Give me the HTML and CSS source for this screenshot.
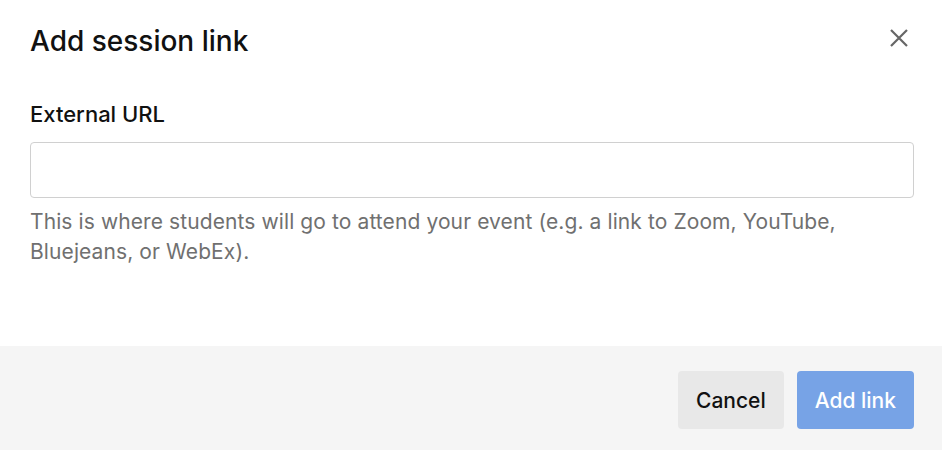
FILE: index.html
```html
<!DOCTYPE html>
<html lang="en">

<head>
    <meta charset="UTF-8">
    <meta name="viewport" content="width=device-width, initial-scale=1.0">
    <title>Add session link</title>
    <link rel="stylesheet" href="styles.css">
</head>
<body>
    <div class="modal">
        <div class="modal-body">
            <div class="modal-header">
                <h1>Add session link</h1>
                <button class="close" aria-label="Close">
                    <svg width="18" height="18" viewBox="0 0 18 18">
                        <path d="M1 1L17 17M17 1L1 17" stroke="#666" stroke-width="2.2" fill="none"/>
                    </svg>
                </button>
            </div>
            <form id="linkForm">
                <label for="url">External URL</label>
                <input type="text" id="url" name="url">
                <p class="help">This is where students will go to attend your event (e.g. a link to Zoom, YouTube, Bluejeans, or WebEx).</p>
            </form>
        </div>
        <div class="modal-footer">
            <button class="btn btn-cancel">Cancel</button>
            <button class="btn btn-primary" disabled>Add link</button>
        </div>
    </div>
</body>

</html>
```

FILE: styles.css
```css
body {
    font-family: Inter, "Noto Sans", sans-serif;
    background-color: #fff;
    margin: 0;
    padding: 0;
}

.modal {
    display: flex;
    flex-direction: column;
    height: 100vh;
}

.modal-body {
    flex: 1;
    padding: 23px 28px 0 30px;
}

.modal-header {
    display: flex;
    justify-content: space-between;
    align-items: flex-start;
}

h1 {
    margin: 0;
    font-size: 28px;
    line-height: 36px;
    font-weight: 500;
    color: #111;
}

.close {
    background: none;
    border: none;
    padding: 0;
    margin: 6px 6px 0 0;
    width: 18px;
    height: 18px;
    cursor: pointer;
}

.close svg {
    display: block;
}

#linkForm {
    display: flex;
    flex-direction: column;
    margin-top: 41px;
}

label {
    font-size: 22px;
    line-height: 28px;
    font-weight: 500;
    color: #111;
}

input {
    margin-top: 14px;
    height: 56px;
    box-sizing: border-box;
    border: 1px solid #d0d0d0;
    border-radius: 4px;
    padding: 0 14px;
    font-family: inherit;
    font-size: 20px;
}

.help {
    margin: 9px 0 0;
    font-size: 21px;
    line-height: 30px;
    letter-spacing: 0.1px;
    color: #707070;
}

.modal-footer {
    background-color: #f5f5f5;
    display: flex;
    justify-content: flex-end;
    gap: 13px;
    padding: 25px 28px 21px 30px;
}

.btn {
    height: 58px;
    padding: 0 18px;
    border: none;
    border-radius: 4px;
    font-family: inherit;
    font-size: 21px;
    font-weight: 500;
    cursor: pointer;
}

.btn-cancel {
    background-color: #e8e8e8;
    color: #111;
}

.btn-primary {
    background-color: #77a3e6;
    color: #fff;
}
```
